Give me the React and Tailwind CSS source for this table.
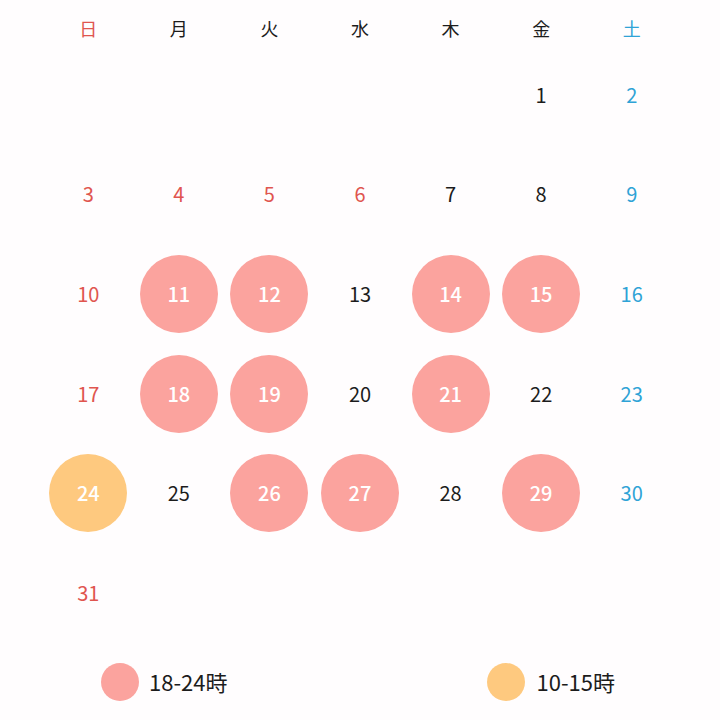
import React from 'react'

const days = ['日', '月', '火', '水', '木', '金', '土']

const pink = [11, 12, 14, 15, 18, 19, 21, 26, 27, 29]
const orange = [24]
const holidays = [3, 4, 5, 6]

const cells = [
  ...Array(5).fill(null),
  ...Array.from({ length: 31 }, (_, i) => i + 1),
]
while (cells.length < 42) cells.push(null)

const red = 'text-[#e0554f]'
const blue = 'text-[#2fa3d6]'
const ink = 'text-[#1c1c1c]'

const colColor = (i) => (i === 0 ? red : i === 6 ? blue : ink)

const App = () => {
  return (
    <div
      className="w-[720px] h-[720px] bg-[#fffdfe] px-[43px] overflow-hidden"
      style={{ fontFamily: '"Noto Sans CJK JP", "Noto Sans", sans-serif' }}
    >
      <div className="grid grid-cols-7 pt-4 pb-[5px]">
        {days.map((d, i) => (
          <div key={d} className={`text-center text-[18px] leading-6 ${colColor(i)}`}>
            {d}
          </div>
        ))}
      </div>

      <div className="grid grid-cols-7">
        {cells.map((n, idx) => {
          const col = idx % 7
          const isPink = pink.includes(n)
          const isOrange = orange.includes(n)
          const color = holidays.includes(n) ? red : colColor(col)
          return (
            <div key={idx} className="h-[99.6px] flex items-center justify-center">
              {n && (isPink || isOrange) ? (
                <div
                  className={`w-[78px] h-[78px] rounded-full flex items-center justify-center text-white text-[20px] font-medium ${
                    isPink ? 'bg-[#fba39e]' : 'bg-[#fec97f]'
                  }`}
                >
                  {n}
                </div>
              ) : (
                n && <span className={`text-[20px] ${color}`}>{n}</span>
              )}
            </div>
          )
        })}
      </div>

      <div className="flex justify-between pl-[58px] pr-[62px] mt-5">
        <div className="flex items-center gap-[10px]">
          <span className="w-[38px] h-[38px] rounded-full bg-[#fba39e]" />
          <span className="text-[22px] text-[#1c1c1c]">18-24時</span>
        </div>
        <div className="flex items-center gap-[12px]">
          <span className="w-[38px] h-[38px] rounded-full bg-[#fec97f]" />
          <span className="text-[22px] text-[#1c1c1c]">10-15時</span>
        </div>
      </div>
    </div>
  )
}

export default App
